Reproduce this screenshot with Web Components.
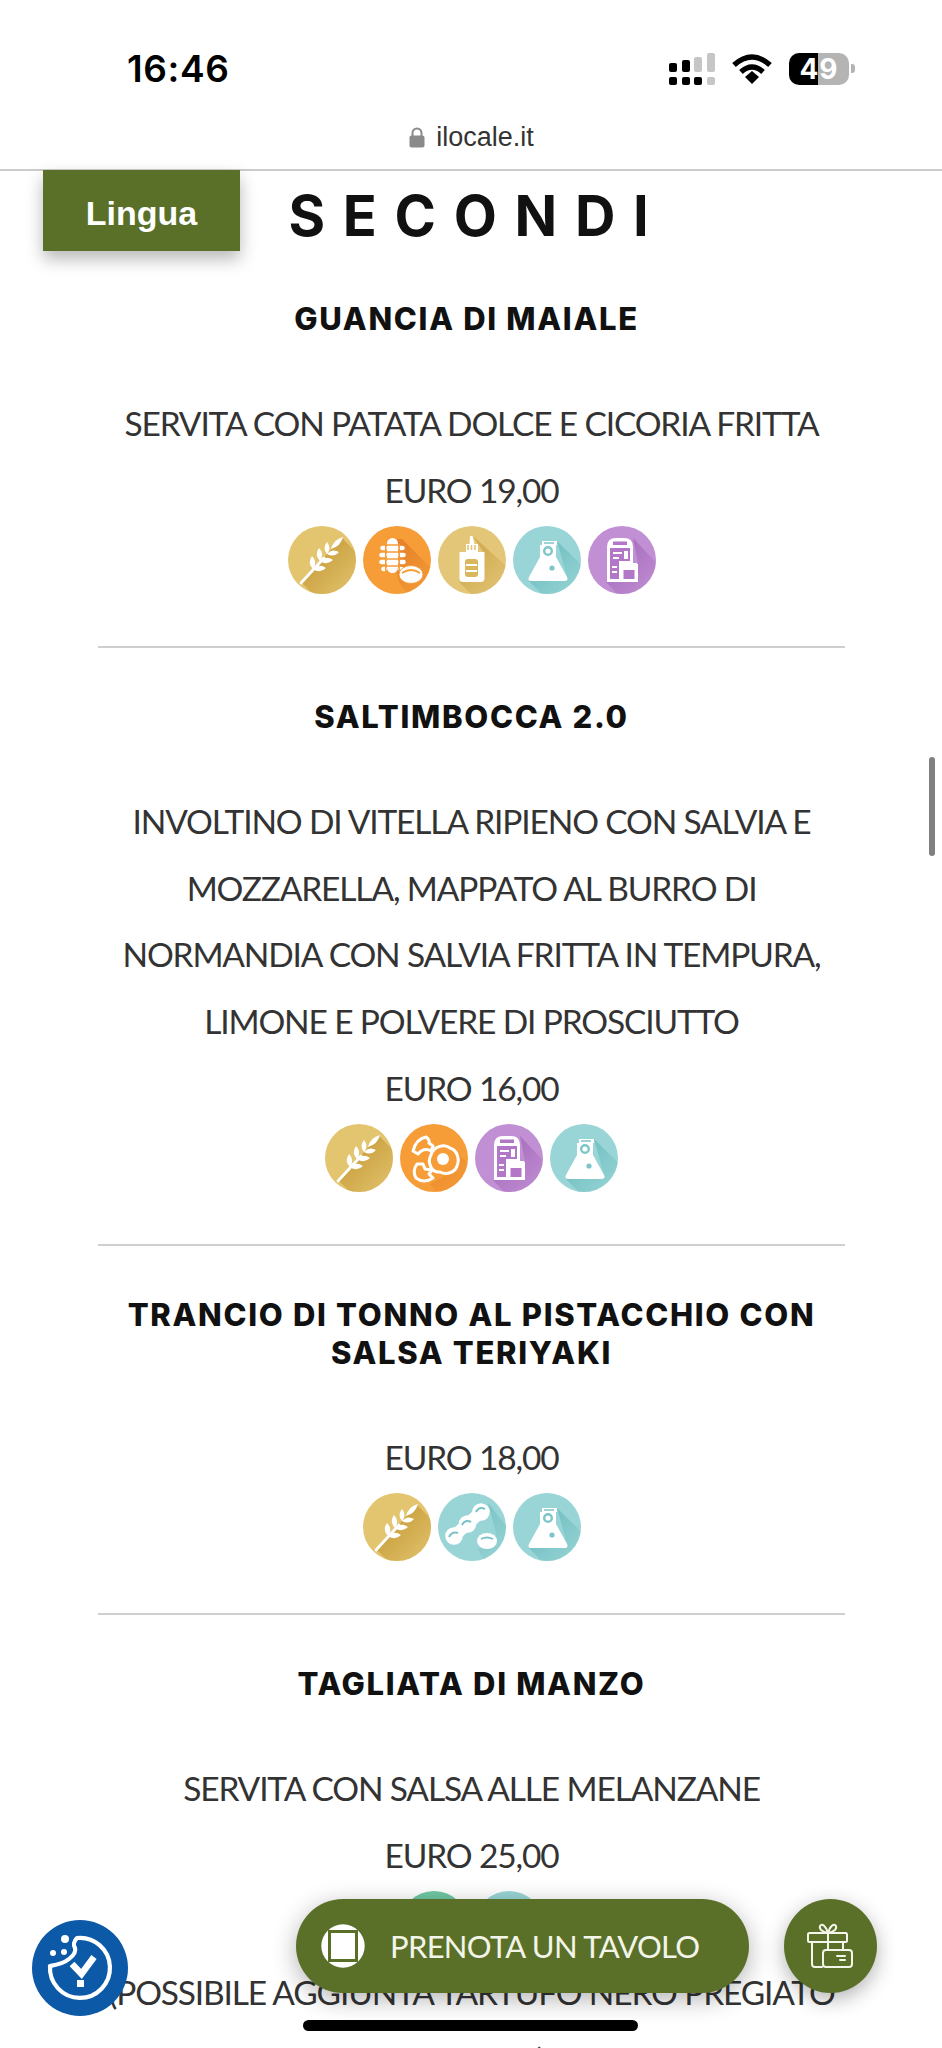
<!DOCTYPE html>
<html lang="it">
<head>
<meta charset="utf-8">
<title>Secondi</title>
<style>
  html, body { margin: 0; background: #fff; }
  body { height: 2048px; overflow: hidden; position: relative; font-family: Lato, "Noto Sans", sans-serif; }
</style>
</head>
<body>
<status-bar time="16:46" battery="49"></status-bar>
<url-bar>ilocale.it</url-bar>
<menu-list>
  <h-section slot="heading">SECONDI</h-section>

  <menu-item shift="10">
    <span slot="title">GUANCIA DI MAIALE</span>
    SERVITA CON PATATA DOLCE E CICORIA FRITTA
    <span slot="price">EURO 19,00</span>
    <allergen-icon slot="icons" kind="wheat"></allergen-icon>
    <allergen-icon slot="icons" kind="sesame"></allergen-icon>
    <allergen-icon slot="icons" kind="mustard"></allergen-icon>
    <allergen-icon slot="icons" kind="sulphite"></allergen-icon>
    <allergen-icon slot="icons" kind="milk"></allergen-icon>
  </menu-item>

  <menu-item>
    <span slot="title">SALTIMBOCCA 2.0</span>
    INVOLTINO DI VITELLA RIPIENO CON SALVIA E MOZZARELLA, MAPPATO AL BURRO DI NORMANDIA CON SALVIA FRITTA IN TEMPURA, LIMONE E POLVERE DI PROSCIUTTO
    <span slot="price">EURO 16,00</span>
    <allergen-icon slot="icons" kind="wheat"></allergen-icon>
    <allergen-icon slot="icons" kind="egg"></allergen-icon>
    <allergen-icon slot="icons" kind="milk"></allergen-icon>
    <allergen-icon slot="icons" kind="sulphite"></allergen-icon>
  </menu-item>

  <menu-item style="--gap: 51.5px">
    <span slot="title">TRANCIO DI TONNO AL PISTACCHIO CON SALSA TERIYAKI</span>
    <span slot="price">EURO 18,00</span>
    <allergen-icon slot="icons" kind="wheat"></allergen-icon>
    <allergen-icon slot="icons" kind="soy"></allergen-icon>
    <allergen-icon slot="icons" kind="sulphite"></allergen-icon>
  </menu-item>

  <menu-item last>
    <span slot="title">TAGLIATA DI MANZO</span>
    SERVITA CON SALSA ALLE MELANZANE
    <span slot="price">EURO 25,00</span>
    <allergen-icon slot="icons" kind="green"></allergen-icon>
    <allergen-icon slot="icons" kind="sulphite"></allergen-icon>
    <span slot="note">(POSSIBILE AGGIUNTA TARTUFO NERO PREGIATO + EURO 3)</span>
  </menu-item>
</menu-list>

<lingua-button>Lingua</lingua-button>
<scroll-thumb></scroll-thumb>
<cookie-badge></cookie-badge>
<book-button>PRENOTA UN TAVOLO</book-button>
<gift-button></gift-button>
<home-indicator></home-indicator>

<script>
const defineEl = (name, css, html) => {
  window.customElements.define(name, class extends HTMLElement {
    constructor () {
      super()
      this.attachShadow({mode: 'open'})
      this.shadowRoot.innerHTML = `<style>${css}</style>${typeof html === 'function' ? html(this) : html}`
    }
  })
}

defineEl('status-bar', `
  :host { display: block; height: 100px; position: relative; color: #000; font-family: Inter, sans-serif; }
  .time { position: absolute; left: 127px; top: 49px; font-size: 37px; font-weight: 600; line-height: 40px; letter-spacing: .6px; }
  svg { position: absolute; left: 660px; top: 45px; }
  .batt { position: absolute; left: 789px; top: 53px; width: 60px; height: 32px; border-radius: 10px;
    background: linear-gradient(90deg, #000 48%, #b4b4b4 48%); color: #fff; font-size: 28px; font-weight: 700;
    line-height: 32px; text-align: center; letter-spacing: 1px; }
  .tip { position: absolute; left: 851px; top: 64px; width: 4px; height: 9px; border-radius: 0 3px 3px 0; background: #b4b4b4; }
`, () => `
  <span class="time">16:46</span>
  <svg width="120" height="48" viewBox="660 45 120 48">
    <g fill="#000">
      <rect x="669" y="63" width="8" height="9" rx="2"/><rect x="682" y="60" width="8" height="12" rx="2"/>
      <rect x="669" y="77" width="8" height="8" rx="2"/><rect x="682" y="77" width="8" height="8" rx="2"/>
      <rect x="694" y="77" width="8" height="8" rx="2"/>
    </g>
    <g fill="#c6c6c6">
      <rect x="694" y="57" width="8" height="15" rx="2"/><rect x="707" y="53" width="8" height="19" rx="2"/>
      <rect x="707" y="77" width="8" height="8" rx="2"/>
    </g>
    <g fill="none" stroke="#000" stroke-width="5.4">
      <path d="M734 65Q752 49 770 65"/><path d="M741 72Q752 62 763 72"/>
    </g>
    <path d="M745 77L752 71L759 77L752 84Z" fill="#000"/>
  </svg>
  <div class="batt">49</div><div class="tip"></div>
`)

defineEl('url-bar', `
  :host { display: flex; height: 71px; align-items: flex-start; justify-content: center; gap: 11px; box-sizing: border-box;
    padding: 19px 0 0 1px; border-bottom: 2px solid #cccccc; font-family: "Liberation Sans", sans-serif; font-size: 27px; line-height: 36px; color: #333; }
  svg { margin-top: 8px; }
`, `<svg width="16" height="21" viewBox="0 0 16 21"><path d="M3.5 9V6a4.5 4.5 0 0 1 9 0v3" fill="none" stroke="#8a8a8a" stroke-width="2"/><rect x="0.5" y="8.5" width="15" height="12" rx="2" fill="#8a8a8a"/></svg><slot></slot>`)

defineEl('menu-list', `
  :host { display: block; width: 747px; margin-left: 98px; font-size: 33.5px; letter-spacing: -1.15px; color: #333; }
`, `<slot name="heading"></slot><slot></slot>`)

defineEl('h-section', `
  :host { display: block; box-sizing: border-box; height: 89px; line-height: 91px; padding-left: 12px; text-align: center; font-family: Inter, sans-serif;
    font-size: 56px; font-weight: 700; letter-spacing: 17.7px; color: #111; }
`, `<slot></slot>`)

defineEl('menu-item', `
  :host { display: block; box-sizing: border-box; text-align: center; padding-top: 50.5px; }
  :host([shift]) { padding-top: 40px; }
  .t { font-family: Inter, sans-serif; font-size: 31px; font-weight: 800; line-height: 38px; color: #111;
    margin-bottom: var(--gap, 52px); letter-spacing: 1.7px; }
  .d { line-height: 66.6px; }
  .p { line-height: 66.6px; }
  .i { display: flex; justify-content: center; gap: 7px; margin-top: 3px; }
  .n { line-height: 66.6px; white-space: normal; }
  hr { border: 0; border-top: 2px solid #cfcfcf; margin: 51.5px 0 0; }
`, (el) => `
  <div class="t" style="padding-right:${el.getAttribute('shift') || 0}px"><slot name="title"></slot></div>
  <div class="d"><slot></slot></div>
  <div class="p"><slot name="price"></slot></div>
  <div class="i"><slot name="icons"></slot></div>
  ${el.hasAttribute('last') ? '' : '<hr>'}
  <div class="n"><slot name="note"></slot></div>
`)

// one wheat grain, from its base to its tip
const grain = (bx, by, tx, ty, w) => {
  const mx = (bx + tx) / 2
  const my = (by + ty) / 2
  const len = Math.hypot(tx - bx, ty - by)
  const nx = (ty - by) / len * w
  const ny = -(tx - bx) / len * w
  return `M${bx} ${by}Q${mx + nx} ${my + ny} ${tx} ${ty}Q${mx - nx} ${my - ny} ${bx} ${by}Z`
}

const wheatGlyph = `
  <path d="M13 57L36 32" stroke="#fff" stroke-width="2.8" stroke-linecap="round"/>
  <path fill="#fff" d="${[
    grain(25, 43, 24, 30, 5.5), grain(32, 35, 31, 22, 5.5), grain(39, 28, 39, 16, 5),
    grain(25, 43, 38, 42, 5.5), grain(32, 35, 45, 34, 5.5), grain(39, 28, 51, 26, 5),
    grain(43, 23, 55, 11, 5)
  ].join('')}"/>`

const allergens = {
  wheat: {c: '#e3c46f', s: '#c9a03e', shade: 'M13 56L54 12L90 48L49 92Z', g: wheatGlyph},
  sesame: {c: '#f69d38', s: '#e5822a', shade: 'M25 13L39 13L75 49L60 90L36 56Z', g: `
    <rect x="24" y="12" width="11" height="35" rx="5.5" fill="#fff"/>
    <path d="M19.5 22h2M37.5 22h2M18.5 29h3M37.5 29h3M18.5 36h3M37.5 36h3M20.5 43h1M37.5 43h1" stroke="#fff" stroke-width="4.6" stroke-linecap="round"/>
    <path d="M22.6 18v28M36.4 18v28" stroke="#f69d38" stroke-width="1.2"/>
    <path d="M23 19h13M23 26h13M23 33h13M23 40h13" stroke="#f69d38" stroke-width="1.4"/>
    <ellipse cx="48" cy="48.5" rx="12" ry="9" fill="#fff" stroke="#f69d38" stroke-width="1"/>
    <path d="M39 47Q48 41 57 47" stroke="#f69d38" stroke-width="1.8" fill="none"/>`},
  mustard: {c: '#e3c678', s: '#d0a94e', shade: 'M35 10L46 27V56L21 56L55 90L90 60Z', g: `
    <path d="M32 10h2.5l2 8h3.5v8h6.5v26q0 4-4 4h-17q-4 0-4-4V26h6.5v-8h3.5z" fill="#fff"/>
    <path d="M30 19v5M33.5 19v5M37 19v5" stroke="#e3c678" stroke-width="1.6"/>
    <rect x="27" y="33" width="13" height="18" rx="3" fill="#d9b75f"/>
    <path d="M28 39h11M28 45h11" stroke="#fff" stroke-width="2"/>`},
  sulphite: {c: '#99d5d6', s: '#72bfc2', shade: 'M44 15L54 51L16 55L50 90L90 60Z', g: `
    <path d="M29 15h15v4h-1v12l11 20q2 4-3 4H19q-5 0-3-4l11-20V19h2z" fill="#fff"/>
    <circle cx="35" cy="25" r="3.8" fill="none" stroke="#7cc5c8" stroke-width="2.4"/>
    <path d="M31 17h10" stroke="#7cc5c8" stroke-width="1.6"/>
    <circle cx="39" cy="42" r="2.6" fill="#7cc5c8"/>`},
  milk: {c: '#c18fd3', s: '#a86fbe', shade: 'M45 12L50 37V56L18 56L50 90L90 60Z', g: `
    <path d="M19 56V21q0-9 9-9h8q9 0 9 9v17h5v18z" fill="#fff"/>
    <rect x="25" y="15.5" width="14" height="3.5" fill="#b277c7"/>
    <path d="M22 22h20v13H31v18h-9z" fill="#b277c7"/>
    <path d="M25 27h9M25 32h6M24 41h5M24 46h5" stroke="#fff" stroke-width="2"/>
    <rect x="36" y="25" width="4" height="8" fill="#fff"/>
    <rect x="33" y="37" width="16" height="18" fill="#fff"/><rect x="35.5" y="44" width="11" height="9" fill="#b277c7"/>`},
  egg: {c: '#f69d38', s: '#e9862c', shade: 'M52 24L56 46L30 60L56 92L90 60Z', g: `
    <path d="M13 27Q16 15 26 13Q30 16 29 19L33 22L31 27Q24 23 18 30Z" fill="none" stroke="#fff" stroke-width="3" stroke-linejoin="round"/>
    <path d="M31 31C33 23 44 19 50 24C57 26 60 35 57 42C55 49 46 51 40 48C31 49 27 38 31 31Z" fill="#f69d38" stroke="#fff" stroke-width="3"/>
    <circle cx="43" cy="35" r="6" fill="#fff"/>
    <path d="M17 40Q12 47 16 54Q24 60 33 54L29 50L32 46L25 45L23 40Z" fill="none" stroke="#fff" stroke-width="3" stroke-linejoin="round"/>`},
  soy: {c: '#99d5d6', s: '#79c2c5', shade: 'M50 10L58 40L59 52L40 56L56 90L90 60Z', g: `
    <path d="M16 43L43 19" stroke="#fff" stroke-width="12" stroke-linecap="round" fill="none"/>
    <circle cx="16" cy="43" r="8.8" fill="#fff"/><circle cx="29.5" cy="31" r="8.8" fill="#fff"/><circle cx="43" cy="19" r="8.8" fill="#fff"/>
    <path d="M11 44Q14 38 20 40M24 32Q27 26 33 29M38 19Q41 13 47 16" stroke="#79c2c5" stroke-width="2" fill="none"/>
    <ellipse cx="49" cy="48" rx="10" ry="8" fill="#fff"/>
    <path d="M43 46Q49 43 55 46" stroke="#79c2c5" stroke-width="1.8" fill="none"/>`},
  green: {c: '#6fc7a2', s: '#62b892', shade: '', g: ''}
}

defineEl('allergen-icon', `
  :host { display: block; width: 68px; height: 68px; }
  svg { display: block; border-radius: 50%; overflow: hidden; }
`, (el) => {
  const a = allergens[el.getAttribute('kind')]
  return `<svg width="68" height="68" viewBox="0 0 68 68">
    <defs><linearGradient id="sh" gradientUnits="userSpaceOnUse" x1="28" y1="28" x2="62" y2="62">
      <stop offset="0" stop-color="${a.s}"/><stop offset="1" stop-color="${a.s}" stop-opacity=".15"/>
    </linearGradient></defs>
    <rect width="68" height="68" fill="${a.c}"/>
    <path d="${a.shade}" fill="url(#sh)"/>
    ${a.g}
  </svg>`
})

defineEl('lingua-button', `
  :host { position: absolute; left: 43px; top: 170px; width: 197px; height: 81px; box-sizing: border-box; padding-top: 5px;
    background: #5a7029; color: #fff; display: flex; align-items: center; justify-content: center;
    box-shadow: 0 8px 16px rgba(0, 0, 0, .28); font: 700 34px/1 "Liberation Sans", sans-serif; }
`, `<slot></slot>`)

defineEl('scroll-thumb', `
  :host { position: absolute; left: 929px; top: 757px; width: 6px; height: 99px; border-radius: 3px; background: #808080; }
`, '')

defineEl('cookie-badge', `
  :host { position: absolute; left: 32px; top: 1920px; width: 96px; height: 96px; z-index: 2; }
  svg { display: block; }
`, `<svg width="96" height="96" viewBox="0 0 96 96">
  <circle cx="48" cy="48" r="48" fill="#0c59a8"/>
  <path d="M45 18A30 30 0 1 1 18 46C24 45 31 44 37 39C42 35 44 31 43 28C41 25 42 21 45 18Z" fill="none" stroke="#fff" stroke-width="4.2" stroke-linejoin="round"/>
  <circle cx="33" cy="19" r="4" fill="#fff"/><circle cx="32" cy="32" r="3" fill="#fff"/><circle cx="21" cy="33" r="3" fill="#fff"/>
  <path d="M40 44L49.5 54L62 37" fill="none" stroke="#fff" stroke-width="6.5"/>
  <rect x="45" y="60" width="7" height="7" fill="#fff"/>
</svg>`)

defineEl('book-button', `
  :host { position: absolute; left: 296px; top: 1899px; width: 453px; height: 94px; border-radius: 47px; background: #5a7029;
    color: #f2f5e8; display: flex; align-items: center; gap: 25px; padding-left: 25px; box-sizing: border-box;
    box-shadow: 0 6px 24px rgba(0, 0, 0, .3); font-size: 31px; letter-spacing: -.7px; z-index: 1; font-family: Lato, sans-serif; }
  svg { flex: none; }
`, `<svg width="44" height="44" viewBox="0 0 44 44">
  <circle cx="22" cy="22" r="21.7" fill="#fff"/>
  <rect x="7" y="6" width="30" height="32" fill="#5a7029"/>
  <rect x="10" y="9" width="24" height="26" fill="#fff"/>
</svg><slot></slot>`)

defineEl('gift-button', `
  :host { position: absolute; left: 784px; top: 1899px; width: 93px; height: 94px; border-radius: 50%; background: #5a7029;
    box-shadow: 0 6px 20px rgba(0, 0, 0, .3); z-index: 1; }
  svg { display: block; }
`, `<svg width="93" height="94" viewBox="0 0 93 94" fill="none" stroke="#f4f6ea" stroke-width="2" stroke-linejoin="round" stroke-linecap="round">
  <rect x="24" y="34" width="39" height="9" rx="1.5"/>
  <path d="M28 43V65q0 3 3 3h7M59 43V51M44 34V51"/>
  <path d="M44 34C38 33 35 30 36 27C38 24 42 27 44 34C46 27 50 24 52 27C53 30 50 33 44 34Z"/>
  <rect x="39" y="51" width="29" height="17" rx="3"/>
  <path d="M53 57h8M56 61h5"/>
</svg>`)

defineEl('home-indicator', `
  :host { position: absolute; left: 303px; top: 2020px; width: 335px; height: 11px; border-radius: 6px; background: #000; z-index: 3; }
`, '')
</script>
</body>
</html>
